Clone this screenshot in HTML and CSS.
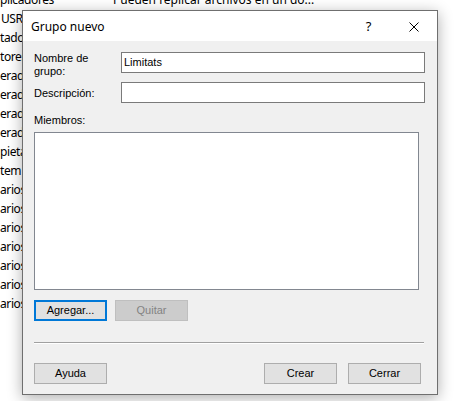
FILE: index.html
```html
<!DOCTYPE html>
<html lang="es">
<head>
<meta charset="utf-8">
<title>Grupo nuevo</title>
<link rel="stylesheet" href="styles.css">
</head>
<body>
<div class="list">
  <div class="row"><span class="name">plicadores</span><span class="desc">Pueden replicar archivos en un do...</span></div>
  <div class="row"><span class="name usr">USR</span></div>
  <div class="row"><span class="name">tado</span></div>
  <div class="row"><span class="name">tores</span></div>
  <div class="row"><span class="name">erado</span></div>
  <div class="row"><span class="name">erado</span></div>
  <div class="row"><span class="name">erado</span></div>
  <div class="row"><span class="name">erado</span></div>
  <div class="row"><span class="name">pieta</span></div>
  <div class="row"><span class="name">tem</span></div>
  <div class="row"><span class="name">arios</span></div>
  <div class="row"><span class="name">arios</span></div>
  <div class="row"><span class="name">arios</span></div>
  <div class="row"><span class="name">arios</span></div>
  <div class="row"><span class="name">arios</span></div>
  <div class="row"><span class="name">arios</span></div>
  <div class="row"><span class="name">arios</span></div>
</div>

<div class="dialog">
  <div class="titlebar">
    <span class="title">Grupo nuevo</span>
    <span class="cap help">?</span>
    <span class="cap close"><svg width="10" height="10" viewBox="0 0 10 10"><path d="M0.5 0.5L9.5 9.5M9.5 0.5L0.5 9.5" stroke="#000" stroke-width="1" fill="none"/></svg></span>
  </div>
  <div class="body">
    <div class="form">
      <label class="lbl two">Nombre de<br>grupo:</label>
      <div class="input">Limitats</div>
      <label class="lbl mid">Descripción:</label>
      <div class="input"></div>
    </div>
    <div class="members-label">Miembros:</div>
    <div class="members"></div>
    <div class="btnrow">
      <button class="btn focus">Agregar...</button>
      <button class="btn disabled">Quitar</button>
    </div>
    <div class="sep"></div>
    <div class="btnrow bottom">
      <button class="btn">Ayuda</button>
      <span class="spacer"></span>
      <button class="btn">Crear</button>
      <button class="btn">Cerrar</button>
    </div>
  </div>
</div>
</body>
</html>
```
FILE: styles.css
```css
html, body {
  margin: 0;
  padding: 0;
}
body {
  width: 457px;
  height: 401px;
  overflow: hidden;
  background: #ffffff;
  position: relative;
  font-family: "Segoe UI", "Noto Sans", "Liberation Sans", sans-serif;
}

.list {
  margin-top: -10px;
  font-size: 12px;
  color: #000;
}
.row {
  height: 19px;
  line-height: 19px;
  display: flex;
  white-space: nowrap;
}
.name {
  width: 113px;
  flex-shrink: 0;
  letter-spacing: -0.4px;
}
.name.usr {
  padding-left: 1px;
  width: 112px;
}
.desc {
  color: #000;
}

.dialog {
  position: absolute;
  left: 22px;
  top: 10px;
  width: 416px;
  height: 385px;
  box-sizing: border-box;
  border: 1px solid #6f6f6f;
  background: #f0f0f0;
  box-shadow: 0 3px 14px rgba(0, 0, 0, 0.32);
  display: flex;
  flex-direction: column;
}

.titlebar {
  height: 30px;
  background: #ffffff;
  display: flex;
  align-items: center;
  font-size: 12px;
  color: #000;
}
.title {
  flex: 1;
  padding-left: 8px;
  padding-top: 1px;
}
.cap {
  width: 46px;
  height: 30px;
  display: flex;
  align-items: center;
  justify-content: center;
}
.help {
  font-size: 13px;
  padding-left: 1px;
  box-sizing: border-box;
}
.close svg {
  display: block;
  margin-top: 1px;
}

.body {
  flex: 1;
  padding: 11px 12px 11px 11px;
  display: flex;
  flex-direction: column;
  font-family: "Liberation Sans", Arial, sans-serif;
  font-size: 11px;
  color: #000;
}

.form {
  display: grid;
  grid-template-columns: 87px 1fr;
  row-gap: 4px;
}
.lbl {
  line-height: 13px;
}
.lbl.mid {
  align-self: center;
  padding-top: 2px;
}
.input {
  height: 21px;
  box-sizing: border-box;
  border: 1px solid #7a7a7a;
  background: #ffffff;
  padding-left: 2px;
  line-height: 19px;
}

.members-label {
  margin-top: 11px;
  line-height: 13px;
}
.members {
  margin-top: 5px;
  height: 158px;
  width: 385px;
  box-sizing: border-box;
  border: 1px solid #828790;
  background: #ffffff;
}

.btnrow {
  display: flex;
  gap: 8px;
  margin-top: 10px;
}
.btnrow.bottom {
  margin-top: 19px;
  gap: 11px;
  padding-right: 4px;
}
.spacer {
  flex: 1;
}
.btn {
  width: 73px;
  height: 21px;
  box-sizing: border-box;
  margin: 0;
  padding: 0;
  border: 1px solid #adadad;
  background: #e1e1e1;
  font-family: "Liberation Sans", Arial, sans-serif;
  font-size: 11px;
  color: #000;
  line-height: 19px;
}
.btn.focus {
  border: 2px solid #0078d7;
  line-height: 17px;
}
.btn.disabled {
  background: #cccccc;
  border-color: #bfbfbf;
  color: #838383;
}

.sep {
  margin-top: 21px;
  height: 1px;
  background: #a0a0a0;
  margin-right: 1px;
  border-bottom: 1px solid #ffffff;
}
```
